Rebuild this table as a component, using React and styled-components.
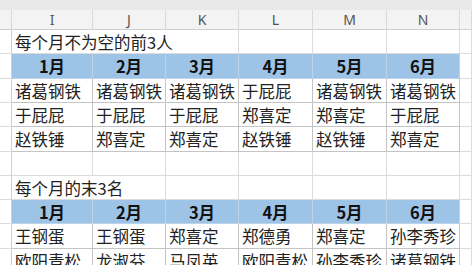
import React from 'react'
import styled, { createGlobalStyle } from 'styled-components';

const GlobalStyle = createGlobalStyle`
    html, body {
        margin: 0;
        padding: 0;
        background: #fff;
        overflow: hidden;
    }
`;

const cols = ['I', 'J', 'K', 'L', 'M', 'N'];
const months = ['1月', '2月', '3月', '4月', '5月', '6月'];

const topRows = [
    ['诸葛钢铁', '诸葛钢铁', '诸葛钢铁', '于屁屁', '诸葛钢铁', '诸葛钢铁'],
    ['于屁屁', '于屁屁', '于屁屁', '郑喜定', '郑喜定', '于屁屁'],
    ['赵铁锤', '郑喜定', '郑喜定', '赵铁锤', '赵铁锤', '郑喜定'],
];

const lastRows = [
    ['王钢蛋', '王钢蛋', '郑喜定', '郑德勇', '郑喜定', '孙李秀珍'],
    ['欧阳青松', '龙淑芬', '马凤英', '欧阳青松', '孙李秀珍', '诸葛钢铁'],
];

const Sheet = styled.div`
    display: grid;
    width: 472px;
    height: 265px;
    overflow: hidden;
    grid-template-columns: 12px 81px 73px 73px 74px 74px 73px 1fr;
    grid-template-rows: 10px 20px 24px 25px 24px 24px 25px 24px 24px 24px 25px 24px;
    font-family: "Noto Sans CJK SC", "Noto Sans", sans-serif;
    color: #222;
`;

const TopBand = styled.div`
    grid-column: 1 / -1;
    background: #e9e9e9;
`;

const ColHead = styled.div`
    display: flex;
    align-items: center;
    justify-content: center;
    background: #f3f3f3;
    border-right: 1px solid #d9d9d9;
    border-bottom: 1px solid #cfcfcf;
    font-family: "Noto Sans", "Liberation Sans", sans-serif;
    font-size: 14px;
    color: #555;
    box-sizing: border-box;
`;

const Cell = styled.div`
    display: flex;
    align-items: center;
    box-sizing: border-box;
    padding: 0 3px;
    white-space: nowrap;
    overflow: visible;
    font-size: 16.5px;
    grid-column: ${({span}) => (span ? `span ${span}` : 'auto')};
    border-right: 1px solid #dcdcdc;
    border-bottom: 1px solid #dcdcdc;
`;

const RowHead = styled(Cell)`
    padding: 0;
    border-right-color: #cfcfcf;
`;

const Title = styled(Cell)`
    padding-left: 3px;
`;

const MonthCell = styled(Cell)`
    justify-content: center;
    background: #9dc3e6;
    font-weight: 700;
    font-size: 16.5px;
    color: #111;
    border-right-color: #bcd4ea;
    border-bottom-color: #bcd4ea;
`;

const NameCell = styled(Cell)`
    border-right-color: #c4c4c4;
    border-bottom-color: #c4c4c4;
`;

const EmptyRow = ({count = 6}) => (
    <>
        <RowHead />
        {Array.from({length: count}).map((_, i) => <Cell key={i} />)}
        <Cell />
    </>
);

const TitleRow = ({text, span}) => (
    <>
        <RowHead />
        <Title span={span}>{text}</Title>
        {Array.from({length: 6 - span}).map((_, i) => <Cell key={i} />)}
        <Cell />
    </>
);

const MonthRow = () => (
    <>
        <RowHead />
        {months.map((m) => <MonthCell key={m}>{m}</MonthCell>)}
        <Cell />
    </>
);

const NameRow = ({names}) => (
    <>
        <RowHead />
        {names.map((n, i) => <NameCell key={i}>{n}</NameCell>)}
        <Cell />
    </>
);

const App = () => {
    return (
        <>
            <GlobalStyle />
            <Sheet>
                <TopBand />
                <ColHead />
                {cols.map((c) => <ColHead key={c}>{c}</ColHead>)}
                <ColHead />

                <TitleRow text="每个月不为空的前3人" span={3} />
                <MonthRow />
                {topRows.map((r, i) => <NameRow key={i} names={r} />)}
                <EmptyRow />
                <TitleRow text="每个月的末3名" span={2} />
                <MonthRow />
                {lastRows.map((r, i) => <NameRow key={i} names={r} />)}
            </Sheet>
        </>
    )
}

export default App
